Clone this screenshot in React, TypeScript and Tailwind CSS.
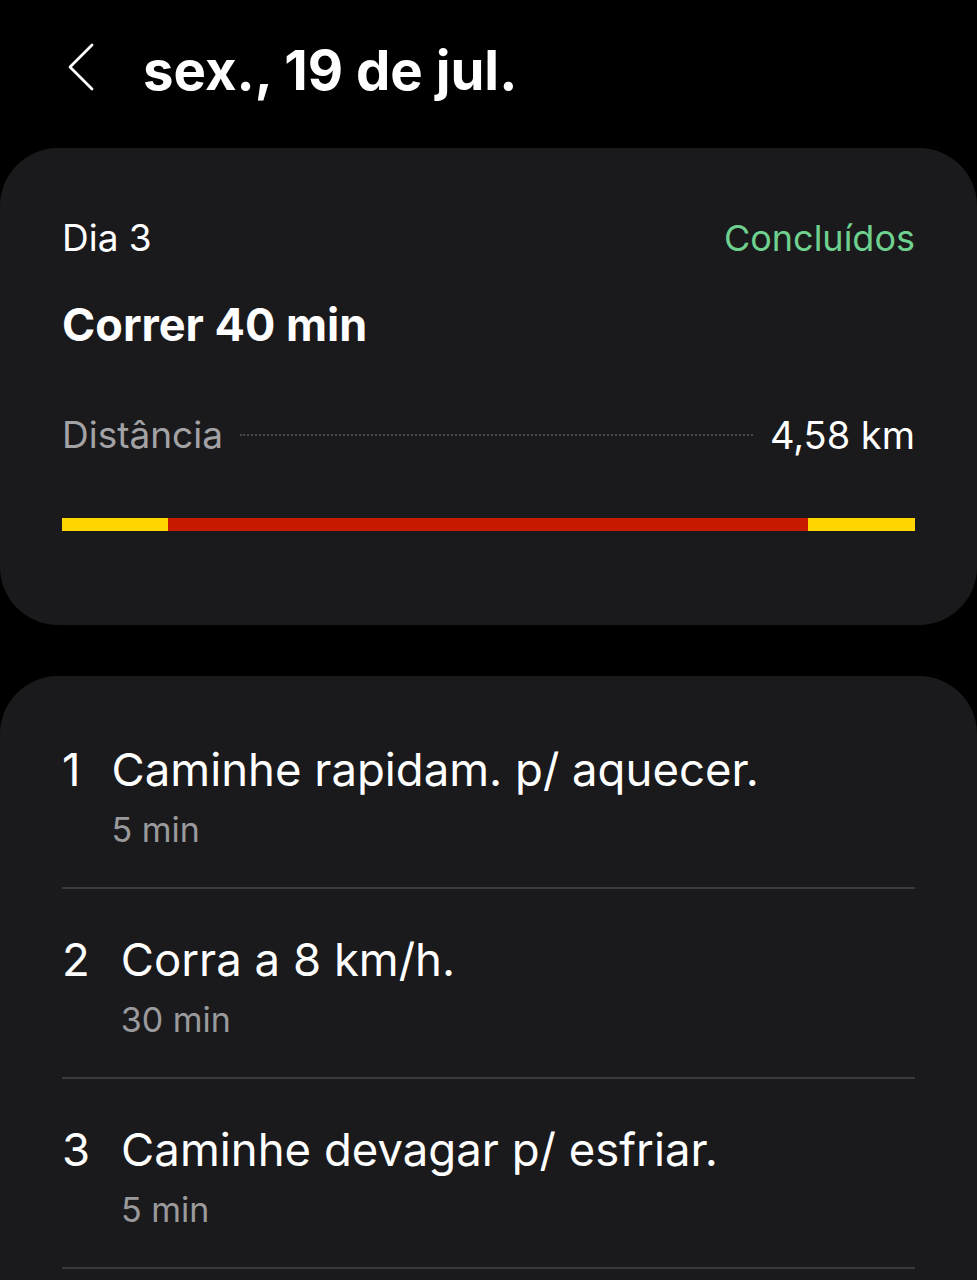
import React from "react";

const font = { fontFamily: "Inter, Roboto, 'Noto Sans', sans-serif" };

function Step({ n, title, sub }: { n: string; title: string; sub: string }) {
  return (
    <div>
      <div className="flex items-start gap-[31px] pt-[45px]">
        <div className="text-[45.5px] leading-[52px] text-white">{n}</div>
        <div className="flex flex-col">
          <div className="text-[45.5px] leading-[52px] text-white">{title}</div>
          <div className="mt-[14px] text-[34px] leading-[40px] text-[#9a9a9c]">{sub}</div>
        </div>
      </div>
      <div className="mt-[37px] h-[2px] bg-[#3a3a3c]" />
    </div>
  );
}

export default function App() {
  return (
    <div className="min-h-[1280px] w-[977px] bg-black overflow-hidden" style={font}>
      <div className="flex h-[148px] items-start pt-[40px]">
        <svg className="ml-[64px] mt-[2px]" width="34" height="50" viewBox="0 0 34 50" fill="none">
          <path d="M28 3 L6 25 L28 47" stroke="#ffffff" strokeWidth="2.8" strokeLinecap="round" strokeLinejoin="round" />
        </svg>
        <div className="ml-[45px] text-[54.5px] leading-[60px] font-bold text-white">sex., 19 de jul.</div>
      </div>

      <div className="rounded-[58px] bg-[#1a1a1c] px-[62px] pt-[70px] pb-[94px]">
        <div className="flex h-[40px] items-center justify-between">
          <div className="text-[37px] text-white">Dia 3</div>
          <div className="text-[36px] text-[#6fd18f]">Concluídos</div>
        </div>
        <div className="mt-[42px] h-[50px] flex items-center text-[45px] font-bold text-white">Correr 40 min</div>
        <div className="mt-[63px] flex h-[44px] items-center">
          <div className="text-[37px] text-[#a3a3a5]">Distância</div>
          <div className="mx-[17px] flex-1 border-t-2 border-dotted border-[#48484a]" />
          <div className="text-[38px] text-white">4,58 km</div>
        </div>
        <div className="mt-[61px] flex h-[13px]">
          <div className="w-[106px] bg-[#ffd600]" />
          <div className="flex-1 bg-[#c81a00]" />
          <div className="w-[107px] bg-[#ffd600]" />
        </div>
      </div>

      <div className="mt-[51px] rounded-t-[58px] bg-[#1a1a1c] px-[62px] pt-[23px] pb-[40px]">
        <Step n="1" title="Caminhe rapidam. p/ aquecer." sub="5 min" />
        <Step n="2" title="Corra a 8 km/h." sub="30 min" />
        <Step n="3" title="Caminhe devagar p/ esfriar." sub="5 min" />
      </div>
    </div>
  );
}
